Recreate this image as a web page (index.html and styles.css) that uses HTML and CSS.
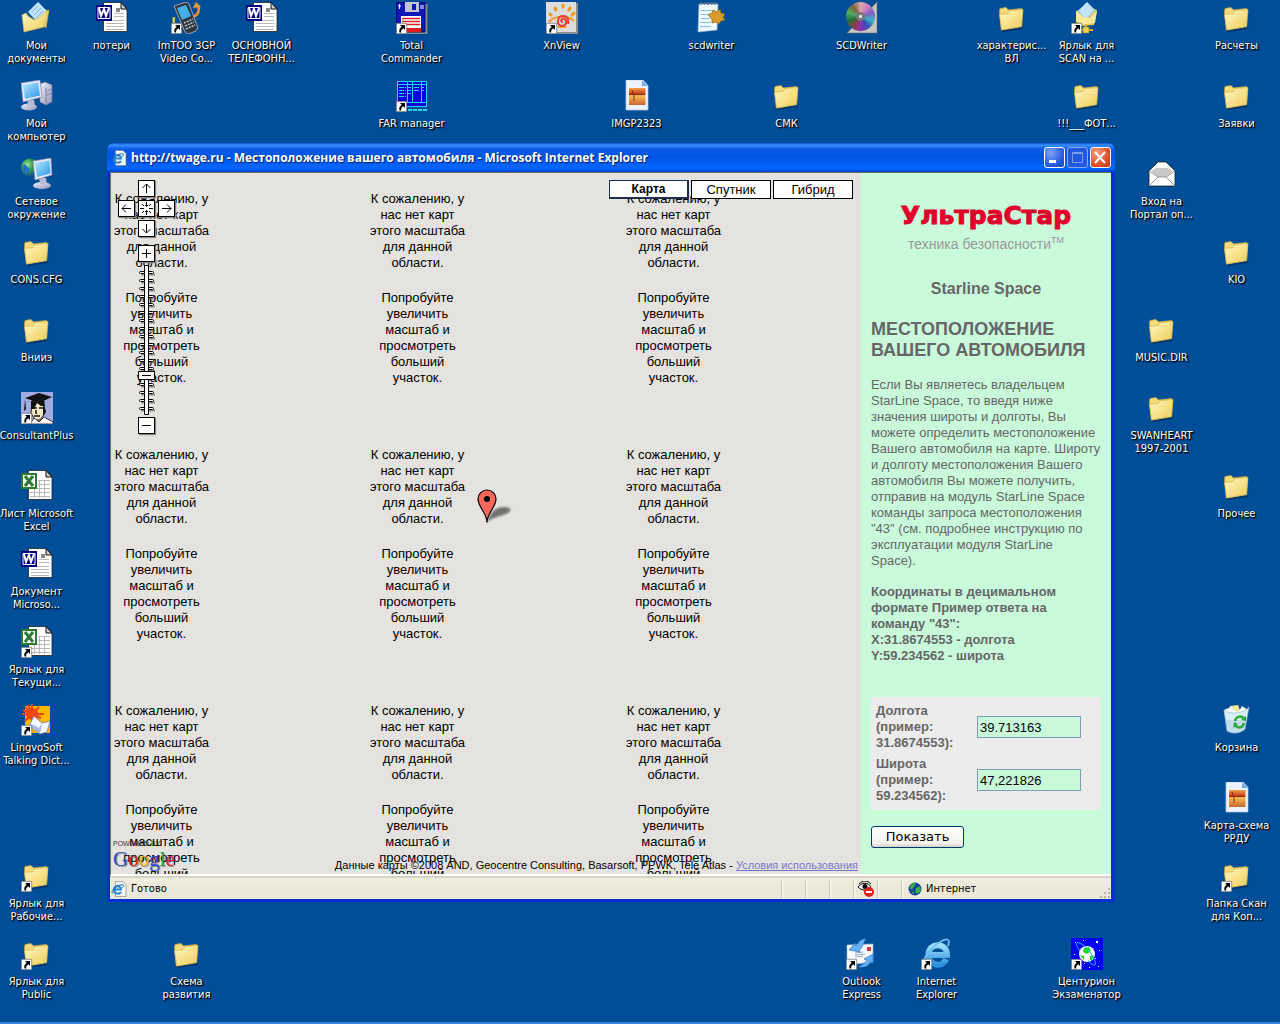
FILE: index.html
```html
<!DOCTYPE html>
<html lang="ru">
<head>
<meta charset="utf-8">
<title>Рабочий стол</title>
<link rel="stylesheet" href="styles.css">
</head>
<body>
<svg class="defs" aria-hidden="true">
  <defs>
    <linearGradient id="gFolder" x1="0" y1="0" x2="1" y2="1"><stop offset="0" stop-color="#fffac4"/><stop offset="1" stop-color="#efcb58"/></linearGradient>
    <linearGradient id="gScreen" x1="0" y1="0" x2="1" y2="1"><stop offset="0" stop-color="#b5ecff"/><stop offset="1" stop-color="#2d92ea"/></linearGradient>
    <linearGradient id="gCase" x1="0" y1="0" x2="1" y2="1"><stop offset="0" stop-color="#f2f3fb"/><stop offset="1" stop-color="#8e90b8"/></linearGradient>
    <linearGradient id="gPhoto" x1="0" y1="0" x2="0" y2="1"><stop offset="0" stop-color="#f5a04c"/><stop offset=".35" stop-color="#c63c18"/><stop offset=".45" stop-color="#f3bd55"/><stop offset="1" stop-color="#c9662c"/></linearGradient>
    <radialGradient id="gGlobe" cx=".35" cy=".35" r=".7"><stop offset="0" stop-color="#9be8a0"/><stop offset=".5" stop-color="#2d9a3c"/><stop offset="1" stop-color="#14469e"/></radialGradient>
    <linearGradient id="gIe" x1="0" y1="0" x2="0" y2="1"><stop offset="0" stop-color="#9fe0fb"/><stop offset="1" stop-color="#2a8fdc"/></linearGradient>

    <symbol id="arrow" viewBox="0 0 32 32"><path fill="#fff" stroke="#555" stroke-width=".6" d="M.3 21.3h10.4v10.4H.3z"/><path d="M4 23h5v5l-1.700-1.700C5.500 27.500 5 28.500 5.200 30.500H3.500C2.800 28 3.600 26.200 5.700 24.700z"/></symbol>
    <symbol id="folder" viewBox="0 0 32 32"><path fill="#0005" d="M5 28.500 27 25.500 28 10l-1 17-21 3z"/><path fill="#f4dc7a" stroke="#c9a545" stroke-width=".8" d="M3.500 9.500 4 6.500l6-1 2.500 2.500 13-1.500 1 2-1 16-20 3.500z"/><path fill="url(#gFolder)" stroke="#d6b550" stroke-width=".7" d="M3.500 12.500 12 11.500l2.500-3L27 7.500 25.500 24.500l-20 3.500z"/></symbol>
    <symbol id="docs" viewBox="0 0 32 32"><path fill="#bfe4fb" stroke="#6ea9dc" stroke-width=".7" d="M7 10 17 0l9 9-8 13z"/><path stroke="#78b0e0" d="m11 10 6-6m-4 9 7-7m-5 10 7-7" fill="none"/><path fill="#f0d468" stroke="#c9a545" stroke-width=".7" d="m25 9 3-1-3 18-3-3z"/><path fill="url(#gFolder)" stroke="#d6b550" stroke-width=".7" d="M1 13l4-2 2 3 6 4 5-2 7-7 1 2-3 14L3 30z"/></symbol>
    <symbol id="word" viewBox="0 0 32 32"><path fill="#fff" stroke="#222" stroke-width=".8" d="M7.500.500H25l6 6.500v22.500H7.500z"/><path d="M25 .5V7h6z" fill="#ccc" stroke="#111"/><path stroke="#b8b8b8" d="M10 18.500h18M10 21.500h18M10 24.500h18M10 27.500h18M18 11.500h10M18 14.500h10" fill="none"/><path fill="#888" d="M20 6h4v4h-4z"/><path fill="#00007f" d="M0 3h16v16H0z"/><path fill="none" stroke="#fff" stroke-width="1" d="M2 5.500h12v11H2z"/><path fill="none" stroke="#fff" stroke-width="2" d="M3 6l2 8 3-7 2 7 3-8"/></symbol>
    <symbol id="excel" viewBox="0 0 32 32"><path fill="#fff" stroke="#222" stroke-width=".8" d="M7.500.500H25l6 6.500v22.500H7.500z"/><path d="M25 .5V7h6z" fill="#ccc" stroke="#111"/><path stroke="#b8b8b8" d="M9 18.500h20M9 22.500h20M9 26.500h20M17 10.500h12M17 14.500h12M13.500 18v10M18.500 10v18M23.500 10v18" fill="none"/><path fill="#2c7a34" d="M0 3h16v16H0z"/><path fill="#fff" d="M2 5h12v12H2z"/><path stroke="#2c7a34" stroke-width="3" d="M4 6l8 10M12 6 4 16"/></symbol>
    <symbol id="computer" viewBox="0 0 32 32"><path fill="url(#gCase)" stroke="#75779b" stroke-width=".6" d="M19 4l5-2 7 3v17l-6 3-6-3z"/><path stroke="#75779b" d="M25 8v16m1-13 5-2m-5 6 5-2" fill="none" stroke-width=".8"/><ellipse cx="8" cy="27" rx="8" ry="3.500" fill="url(#gCase)"/><path fill="#b8bad6" d="M7 20h6l1 6H6z"/><path fill="#e6e8f6" stroke="#8587ad" stroke-width=".7" d="M0 3 19 0l2 17L2 22z"/><path fill="url(#gScreen)" d="M2 5 17 2.500l2 13L4 19z"/></symbol>
    <symbol id="network" viewBox="0 0 32 32"><circle cx="9" cy="9.500" r="9" fill="url(#gGlobe)"/><path fill="#2a6fd0" d="M2 7c3-2 4 2 6 3s-1 5-3 6C3 14 1 11 2 7z"/><ellipse cx="21" cy="27.500" rx="9" ry="3.500" fill="url(#gCase)"/><path fill="#b8bad6" d="M18 20h7l1 6h-7z"/><path fill="#e6e8f6" stroke="#8587ad" stroke-width=".7" d="M12 3 30 0l1 17-17 5z"/><path fill="url(#gScreen)" d="M14 5 28.500 2.500l1 13L16 19z"/></symbol>
    <symbol id="jpeg" viewBox="0 0 32 32"><path fill="#eef4ff" stroke="#b5c6e8" stroke-width=".7" d="M5 0h17l5 5.500V30H5z"/><path fill="#6fb1ec" d="M21 0v6h6z"/><path fill="url(#gPhoto)" d="M8 8h16.500v17H8z"/><path stroke="#8a2a10" d="M8 14.500h16M11 10l2 6v5" fill="none"/></symbol>
    <symbol id="phone" viewBox="0 0 32 32"><path fill="none" stroke="#cfc840" stroke-width="2.500" d="M3 15c-1 5 0 7 1 9"/><path fill="none" stroke="#ee8a28" stroke-width="3" d="M22 15c6-3 7-6 5-11"/><path fill="#f09a38" d="m22 6 3-6 5 5z"/><path fill="#30363f" stroke="#b7bfc9" stroke-width=".8" d="m3 4 12-4 3 2 9 24-2 3-8 3-3-2z"/><path fill="#46aee8" d="m6 6 9-3 5 11-9 4z"/><path stroke="#bcc8d5" stroke-width="1.400" stroke-dasharray="2 1" d="m13 21 9-4m-8 7 9-4m-8 7 9-4"/></symbol>
    <symbol id="floppy" viewBox="0 0 32 32"><path fill="#888" d="M2 2h29.500v30H2z"/><path fill="#0d18b8" stroke="#000060" stroke-width=".8" d="M.5.500H29v29.500H.5z"/><path fill="#c4c4d0" d="M9 0h14v10H9z"/><path fill="#0d18b8" d="M16 2h4v6h-4z"/><path stroke="#fff" d="M2 4h3M3.500 2v5M24 4h4M24 6h4"/><path fill="#fff" d="M5 14h20v16H5z"/><path stroke="#d42228" stroke-width="1.500" d="M6 16.500h18M6 19.500h18M6 22.500h18"/><path fill="#e01c24" d="M10 26h15v4H10z"/></symbol>
    <symbol id="xn" viewBox="0 0 32 32"><path fill="#8d8d8d" d="M1 1h31v31H1z"/><path fill="#dcdcdc" d="M0 0h30v30H0z"/><path stroke="#f29a1c" stroke-width="3" stroke-linecap="round" d="m4 12 1 1m4-7 1 2m7-5v2m7 1-1 2m5 3-2 2"/><path fill="none" stroke="#f29a1c" stroke-width="2" d="M3 20c6-7 18-7 25-1M12 25h8"/><path fill="none" stroke="#e84034" stroke-width="2" d="M17 20c-3 0-2-4 1-3 4 1 2 7-2 7-6-1-5-10 1-10 5 0 6 4 5 8"/></symbol>
    <symbol id="note" viewBox="0 0 32 32"><path fill="#eff8ff" stroke="#9ab9d0" stroke-width=".7" d="M3 2h19l-1 26-19 2z"/><path stroke="#65728c" stroke-width="2.500" stroke-dasharray="2 1.500" d="M4 1.500h18"/><path stroke="#84c2e6" d="M5 8.500h12M5 12.500h10M5 16.500h9M4 20.500h11M4 24.500h11"/><path fill="#d79b28" stroke="#92600e" stroke-width=".7" d="m12 13 4-2 1-3 4 2 3-3 1 4 4 1-2 3 2 3-4 1-2 3-3-2-4 1v-4z"/></symbol>
    <symbol id="blank" viewBox="0 0 32 32"><path fill="#c6c6bd" stroke="#6c6c66" stroke-width=".6" d="M31 0v31H1z"/></symbol>
    <symbol id="netdocs" viewBox="0 0 32 32"><path fill="#ecca5c" d="m5 9 11-5 10 4-3 15-13 1-5-4z"/><path fill="#bfe4fb" stroke="#6ea9dc" stroke-width=".7" d="m7 9 9-9 8 8-9 10z"/><path fill="#f9e899" d="m5 9 8 6 6 1 7-7-2 12-12 2-7-4z"/><path stroke="#e2b43c" stroke-width="2" d="M15 22v6m-4 0h11"/><path fill="#f6cf55" stroke="#a07818" stroke-width=".6" d="M12 25h6v6h-6z"/></symbol>
    <symbol id="far" viewBox="0 0 32 32"><path fill="#0000e0" stroke="#21d8f8" d="M1.500 1.500h29v25h-29z"/><path stroke="#21d8f8" fill="none" d="M11.500 1v21m5-21v21m9-21v21M2 22.500h28M2 4.500h28"/><path stroke="#21d8f8" stroke-width="1" stroke-dasharray="5 1" d="M3 7.500h7m-7 3h7m-7 3h7m-7 3h7m8-9h6m-6 3h6m-12-3h3m-3 3h3m-3 3h3m11-6h2m-2 3h2"/><path stroke="#21d8f8" stroke-width="2" stroke-dasharray="4 1" d="M12 30h19"/></symbol>
    <symbol id="mail" viewBox="0 0 32 32"><path fill="#fff" stroke="#222" stroke-width=".8" d="M3 13 12 4h8l9 9v15H3z"/><path fill="#c8c8c8" d="m5 13 5-3h12l5 3-7 6h-8z"/><path fill="none" stroke="#999" d="m3 13 9 6h8l9-6M3 28l9-9m17 9-9-9"/></symbol>
    <symbol id="scholar" viewBox="0 0 32 32"><path fill="#a0abe0" d="M0 0h32v32H0z"/><path fill="#f4e7c4" stroke="#222" d="M11 9h12l1 12-5 7h-5l-4-7z"/><path fill="#111" d="m4 6 14-5 13 4-13 6zM10 9h13v5h-3l-4-3-3 6h-3zM4 7l1 10-2 2 1-12zM22 13l3 6-3 5z"/><path stroke="#111" stroke-width="1.500" fill="none" d="M12 16h4m2 0h4m-7 2v4m-2 2h6"/><path fill="#fff" stroke="#111" stroke-width=".8" d="m9 32 4-6 5 4 5-5 9 5v2z"/></symbol>
    <symbol id="lingvo" viewBox="0 0 32 32"><path fill="#ffb900" d="M4 2h25v27H4z"/><circle cx="11" cy="10" r="6" fill="#f04414"/><path stroke="#f04414" stroke-width="2" d="M11 0v22M1 10h22M4 3l14 14M18 3 4 17M7 1l8 18M2 6l18 8"/><path fill="#f5f7ff" stroke="#6174a8" stroke-width=".7" d="m13 12 8 7 8-2-3 11-7 2-11-8z"/><path fill="#a7b7de" d="m21 19-2 11-11-8 2-2 8 4z"/></symbol>
    <symbol id="bin" viewBox="0 0 32 32"><path fill="#f5e69a" d="m9 2 8-1 3 8H8z"/><path fill="#f4f8fb" d="m3 6 7-3 7 6 4-7 6 4-2 10H5z"/><path fill="#d8edf5" fill-opacity=".9" stroke="#9cc2d8" stroke-width=".7" d="M3 6c5 5 20 4 25-3l-4 22c-5 5-13 5-18 2z"/><path fill="none" stroke="#2ca838" stroke-width="2.500" d="M14 17c1-5 7-6 9-2m0 4c-1 5-6 6-9 2"/><path fill="#2ca838" d="m20 16 5-4v5zM17 20l-5 4 1-6z"/></symbol>
    <symbol id="outlook" viewBox="0 0 32 32"><path fill="#f8fafc" stroke="#9eb5cf" stroke-width=".7" d="m1 7 26-1v18L1 27z"/><path fill="#cf3a32" d="M21 9h4v4h-4z"/><path stroke="#93a9c8" d="m9 15 8-1m-8 3 10-1m-10 3 8-1"/><path fill="#64b0f2" stroke="#2c73c8" stroke-width=".7" d="M3 12 9 5l1 3c4-5 4-7 10-7-4 5-2 8-7 11l1 2zM27 16l-9 5 3 1c-3 5-5 4-8 7 7 1 10-2 12-6l2 2z"/></symbol>
    <symbol id="ie" viewBox="0 0 32 32"><path fill="none" stroke="url(#gIe)" stroke-width="6" d="M8 17h18C26 4 8 4 7.500 16.500 7 28 22 30 25 21"/><path fill="none" stroke="#6cc0f2" stroke-width="1.800" d="M5 26C-2 30 5 12 19 4c6-4 11-4 8 4"/></symbol>
    <symbol id="planet" viewBox="0 0 32 32"><path fill="#0000f4" d="M0 0h32v32H0z"/><path fill="#fff" d="M4 4h1v1H4zM12 2h1v1h-1zM25 3h2v2h-2zM28 12h1v1h-1zM3 16h1v1H3zM24 20h1v1h-1zM27 28h1v1h-1zM18 29h1v1h-1zM13 25h1v1h-1z"/><circle cx="16" cy="16" r="8" fill="#fff"/><path fill="#18d824" d="m13 10 5-1 2 4-4 3-4-2zM9 17l4 1v4zM19 18l4-1-2 5h-2z"/><path fill="none" stroke="#20c8f0" d="M9 13C3 5 5 2 12 7s16 20 11 20c-2 0-5-3-6-5"/></symbol>
    <symbol id="iepage" viewBox="0 0 16 16"><path fill="#f5f7f2" stroke="#777" stroke-width=".6" d="M4.500.500H12L15 3.500v12H4.500z"/><path fill="none" stroke="#2587d8" stroke-width="2" d="M3 8.500h7C10 4 3 4 3 9s6 4 7 2"/><path fill="none" stroke="#1c68b8" d="M2 12C-1 13 3 5 9 4s3 2 2 3"/></symbol>
  </defs>
</svg>

<main class="desktop">
  <nav class="icons" aria-label="Значки рабочего стола">
    <a class="icon c1 r1" href="#"><svg><use href="#docs"/></svg><span>Мои<br>документы</span></a>
    <a class="icon c2 r1" href="#"><svg><use href="#word"/></svg><span>потери</span></a>
    <a class="icon c3 r1" href="#"><svg><use href="#phone"/><use href="#arrow"/></svg><span>ImTOO 3GP<br>Video Co...</span></a>
    <a class="icon c4 r1" href="#"><svg><use href="#word"/></svg><span>ОСНОВНОЙ<br>ТЕЛЕФОНН...</span></a>
    <a class="icon c6 r1" href="#"><svg><use href="#floppy"/><use href="#arrow"/></svg><span>Total<br>Commander</span></a>
    <a class="icon c8 r1" href="#"><svg><use href="#xn"/><use href="#arrow"/></svg><span>XnView</span></a>
    <a class="icon c10 r1" href="#"><svg><use href="#note"/></svg><span>scdwriter</span></a>
    <a class="icon c12 r1" href="#"><span class="cd"><svg><use href="#blank"/></svg><i class="disc"></i></span><span>SCDWriter</span></a>
    <a class="icon c14 r1" href="#"><svg><use href="#folder"/></svg><span>характерис...<br>ВЛ</span></a>
    <a class="icon c15 r1" href="#"><svg><use href="#netdocs"/><use href="#arrow"/></svg><span>Ярлык для<br>SCAN на ...</span></a>
    <a class="icon c17 r1" href="#"><svg><use href="#folder"/></svg><span>Расчеты</span></a>

    <a class="icon c1 r2" href="#"><svg><use href="#computer"/></svg><span>Мой<br>компьютер</span></a>
    <a class="icon c6 r2" href="#"><svg><use href="#far"/><use href="#arrow"/></svg><span>FAR manager</span></a>
    <a class="icon c9 r2" href="#"><svg><use href="#jpeg"/></svg><span>IMGP2323</span></a>
    <a class="icon c11 r2" href="#"><svg><use href="#folder"/></svg><span>СМК</span></a>
    <a class="icon c15 r2" href="#"><svg><use href="#folder"/></svg><span>!!!___ФОТ...</span></a>
    <a class="icon c17 r2" href="#"><svg><use href="#folder"/></svg><span>Заявки</span></a>

    <a class="icon c1 r3" href="#"><svg><use href="#network"/></svg><span>Сетевое<br>окружение</span></a>
    <a class="icon c16 r3" href="#"><svg><use href="#mail"/></svg><span>Вход на<br>Портал оп...</span></a>
    <a class="icon c1 r4" href="#"><svg><use href="#folder"/></svg><span>CONS.CFG</span></a>
    <a class="icon c17 r4" href="#"><svg><use href="#folder"/></svg><span>KIO</span></a>
    <a class="icon c1 r5" href="#"><svg><use href="#folder"/></svg><span>Внииэ</span></a>
    <a class="icon c16 r5" href="#"><svg><use href="#folder"/></svg><span>MUSIC.DIR</span></a>
    <a class="icon c1 r6" href="#"><svg><use href="#scholar"/><use href="#arrow"/></svg><span>ConsultantPlus</span></a>
    <a class="icon c16 r6" href="#"><svg><use href="#folder"/></svg><span>SWANHEART<br>1997-2001</span></a>
    <a class="icon c1 r7" href="#"><svg><use href="#excel"/></svg><span>Лист Microsoft<br>Excel</span></a>
    <a class="icon c17 r7" href="#"><svg><use href="#folder"/></svg><span>Прочее</span></a>
    <a class="icon c1 r8" href="#"><svg><use href="#word"/></svg><span>Документ<br>Microso...</span></a>
    <a class="icon c1 r9" href="#"><svg><use href="#excel"/><use href="#arrow"/></svg><span>Ярлык для<br>Текущи...</span></a>
    <a class="icon c1 r10" href="#"><svg><use href="#lingvo"/><use href="#arrow"/></svg><span>LingvoSoft<br>Talking Dict...</span></a>
    <a class="icon c17 r10" href="#"><svg><use href="#bin"/></svg><span>Корзина</span></a>
    <a class="icon c17 r11" href="#"><svg><use href="#jpeg"/></svg><span>Карта-схема<br>РРДУ</span></a>
    <a class="icon c1 r12" href="#"><svg><use href="#folder"/><use href="#arrow"/></svg><span>Ярлык для<br>Рабочие...</span></a>
    <a class="icon c17 r12" href="#"><svg><use href="#folder"/><use href="#arrow"/></svg><span>Папка Скан<br>для Коп...</span></a>
    <a class="icon c1 r13" href="#"><svg><use href="#folder"/><use href="#arrow"/></svg><span>Ярлык для<br>Public</span></a>
    <a class="icon c3 r13" href="#"><svg><use href="#folder"/></svg><span>Схема<br>развития</span></a>
    <a class="icon c12 r13" href="#"><svg><use href="#outlook"/><use href="#arrow"/></svg><span>Outlook<br>Express</span></a>
    <a class="icon c13 r13" href="#"><svg><use href="#ie"/><use href="#arrow"/></svg><span>Internet<br>Explorer</span></a>
    <a class="icon c15 r13" href="#"><svg><use href="#planet"/><use href="#arrow"/></svg><span>Центурион<br>Экзаменатор</span></a>
  </nav>

  <section class="window">
    <header class="titlebar">
      <svg class="small"><use href="#iepage"/></svg>
      <h1>http://twage.ru - Местоположение вашего автомобиля - Microsoft Internet Explorer</h1>
      <button class="cap" aria-label="Свернуть"><svg viewBox="0 0 19 19"><path fill="#fff" d="M4 12h7v3H4z"/></svg></button>
      <button class="cap dim" aria-label="Развернуть"><svg viewBox="0 0 19 19"><path fill="none" stroke="#7b9df0" d="M4.500 4.500h10v10h-10zM4 5.500h11"/></svg></button>
      <button class="cap close" aria-label="Закрыть"><svg viewBox="0 0 19 19"><path stroke="#fff" stroke-width="2" d="m4 4 10 11M14 4 4 15"/></svg></button>
    </header>

    <div class="client">
      <div class="map">
        <div class="tiles">
          <div class="tile"><p>К сожалению, у нас нет карт этого масштаба для данной области.</p><p>Попробуйте увеличить масштаб и просмотреть больший участок.</p></div>
          <div class="tile"><p>К сожалению, у нас нет карт этого масштаба для данной области.</p><p>Попробуйте увеличить масштаб и просмотреть больший участок.</p></div>
          <div class="tile"><p>К сожалению, у нас нет карт этого масштаба для данной области.</p><p>Попробуйте увеличить масштаб и просмотреть больший участок.</p></div>
          <div class="tile"><p>К сожалению, у нас нет карт этого масштаба для данной области.</p><p>Попробуйте увеличить масштаб и просмотреть больший участок.</p></div>
          <div class="tile"><p>К сожалению, у нас нет карт этого масштаба для данной области.</p><p>Попробуйте увеличить масштаб и просмотреть больший участок.</p></div>
          <div class="tile"><p>К сожалению, у нас нет карт этого масштаба для данной области.</p><p>Попробуйте увеличить масштаб и просмотреть больший участок.</p></div>
          <div class="tile"><p>К сожалению, у нас нет карт этого масштаба для данной области.</p><p>Попробуйте увеличить масштаб и просмотреть больший участок.</p></div>
          <div class="tile"><p>К сожалению, у нас нет карт этого масштаба для данной области.</p><p>Попробуйте увеличить масштаб и просмотреть больший участок.</p></div>
          <div class="tile"><p>К сожалению, у нас нет карт этого масштаба для данной области.</p><p>Попробуйте увеличить масштаб и просмотреть больший участок.</p></div>
        </div>

        <div class="controls">
          <div class="pad">
            <button class="ctl up" aria-label="Вверх"><svg viewBox="0 0 17 17"><path d="M8.500 13V4m-4 4 4-4 4 4"/></svg></button>
            <button class="ctl left" aria-label="Влево"><svg viewBox="0 0 17 17"><path d="M13 8.500H4m4-4-4 4 4 4"/></svg></button>
            <button class="ctl mid" aria-label="Вернуться"><svg viewBox="0 0 17 17"><path d="M8.500 2v4m0 5v4M2 8.500h4m5 0h4M4 4l2 2m5 5 2 2M13 4l-2 2m-5 5-2 2M7 5l1.500 1.500L10 5M7 12l1.500-1.500L10 12"/></svg></button>
            <button class="ctl right" aria-label="Вправо"><svg viewBox="0 0 17 17"><path d="M4 8.500h9m-4-4 4 4-4 4"/></svg></button>
            <button class="ctl down" aria-label="Вниз"><svg viewBox="0 0 17 17"><path d="M8.500 4v9m-4-4 4 4 4-4"/></svg></button>
          </div>
          <button class="ctl" aria-label="Увеличить"><svg viewBox="0 0 17 17"><path d="M8.500 4v9M4 8.500h9"/></svg></button>
          <svg class="slider" viewBox="0 0 17 155">
            <defs><pattern id="ticks" width="17" height="8" patternUnits="userSpaceOnUse"><path stroke="#555" stroke-opacity=".6" stroke-width="2" d="M3 4.500h14"/><rect x="1.500" y="1.500" width="14" height="2" rx="1" fill="#fff" stroke="#000"/></pattern></defs>
            <path fill="url(#ticks)" d="M0 8h17v144H0z"/>
            <path fill="#fff" stroke="#000" d="M6.500 3.500h4v149h-4z"/>
            <path fill="#fff" stroke="#000" d="M.5 109.500h16v8H.5z"/><path stroke="#000" d="M4 113.500h9"/>
          </svg>
          <button class="ctl" aria-label="Уменьшить"><svg viewBox="0 0 17 17"><path d="M4 8.500h9"/></svg></button>
        </div>

        <div class="types">
          <button class="type on">Карта</button>
          <button class="type">Спутник</button>
          <button class="type">Гибрид</button>
        </div>

        <svg class="pin" viewBox="0 0 36 36">
          <defs><filter id="soft" x="-20%" y="-20%" width="140%" height="140%"><feGaussianBlur stdDeviation="1"/></filter></defs>
          <path fill="#000" fill-opacity=".5" filter="url(#soft)" d="M10 33c2-5 4-11 11-14 7-2 14-1 12 3-3 5-14 4-23 11z"/>
          <path fill="#fd665b" stroke="#000" stroke-width="1.200" d="M10 33.500C10 24 1 18 1 10a9 9 0 0 1 18 0c0 8-9 14-9 23.500z"/><circle cx="10" cy="10" r="3"/>
        </svg>

        <div class="brand"><small>POWERED BY</small><b><i class="gb">G</i><i class="gr">o</i><i class="gy">o</i><i class="gb">g</i><i class="gg">l</i><i class="gr">e</i></b></div>
        <div class="copyright">Данные карты ©2008 AND, Geocentre Consulting, Basarsoft, PPWK, Tele Atlas - <a href="#">Условия использования</a></div>
      </div>

      <aside class="side">
        <div class="logo">УльтраСтар</div>
        <div class="slogan">техника безопасности<sup>TM</sup></div>
        <h2>Starline Space</h2>
        <h3>МЕСТОПОЛОЖЕНИЕ ВАШЕГО АВТОМОБИЛЯ</h3>
        <p>Если Вы являетесь владельцем StarLine Space, то введя ниже значения широты и долготы, Вы можете определить местоположение Вашего автомобиля на карте. Широту и долготу местоположения Вашего автомобиля Вы можете получить, отправив на модуль StarLine Space команды запроса местоположения "43" (см. подробнее инструкцию по эксплуатации модуля StarLine Space).</p>
        <p class="strong">Координаты в децимальном формате Пример ответа на команду "43":<br>X:31.8674553 - долгота<br>Y:59.234562 - широта</p>
        <form onsubmit="return false">
          <div class="fields">
            <label for="lon">Долгота (пример: 31.8674553):</label><input id="lon" type="text" value="39.713163">
            <label for="lat">Широта (пример: 59.234562):</label><input id="lat" type="text" value="47,221826">
          </div>
          <button class="show" type="submit">Показать</button>
        </form>
      </aside>
    </div>

    <footer class="status">
      <svg class="small"><use href="#iepage"/></svg>
      <span class="ready">Готово</span>
      <span class="cell"></span><span class="cell"></span><span class="cell"></span>
      <span class="cell"><svg viewBox="0 0 18 16"><path fill="#fff" stroke="#000" d="M1 6c4-5 10-5 13 0-4 4-9 4-13 0z"/><circle cx="8" cy="5.500" r="2.500"/><path stroke="#000" d="M2 3c4-4 8-4 12 0" fill="none"/><circle cx="12" cy="11" r="5" fill="#e02020"/><path fill="#fff" d="M9 10h6v2H9z"/></svg></span>
      <span class="cell"></span>
      <span class="zone"><svg viewBox="0 0 14 14"><circle cx="7" cy="7" r="6.500" fill="#173fa8"/><path fill="#35b045" d="M2 4c2-3 4-3 5-3s0 3-1 4-2 3-4 2zM8 6l4-2 1 4-3 4-3-2zM3 9l3 1v3z"/></svg>Интернет</span>
      <svg class="grip" viewBox="0 0 12 12"><path fill="#b8b4a2" d="M9 1h2v2H9zM9 5h2v2H9zM9 9h2v2H9zM5 5h2v2H5zM5 9h2v2H5zM1 9h2v2H1z"/></svg>
    </footer>
  </section>
</main>
<div class="taskbar"></div>
</body>
</html>
```
FILE: styles.css
```css
* { box-sizing: border-box; }
html, body { margin: 0; min-height: 100vh; }
body {
  display: flex;
  flex-direction: column;
  background: #004e98;
  font-family: "Liberation Sans", Arial, sans-serif;
  font-size: 13px;
  line-height: 16px;
  overflow: hidden;
}
button, input { font: inherit; margin: 0; padding: 0; }
.defs { position: absolute; width: 0; height: 0; }
.desktop { position: relative; flex: 1; }
.taskbar { height: 2px; background: #3a80e0; }

/* desktop icons */
.icons {
  display: grid;
  grid-template-columns: repeat(17, 75px);
  grid-template-rows: repeat(13, 78px);
  padding-top: 2px;
}
.icon {
  display: flex;
  flex-direction: column;
  align-items: center;
  gap: 5px;
  margin-right: 2px;
  color: #fff;
  font: 11px/13px "DejaVu Sans Condensed", Tahoma, sans-serif;
  text-align: center;
  text-decoration: none;
  text-shadow: 1px 1px 1px #000, 1px 1px 2px #000;
  white-space: nowrap;
}
.icon svg { display: block; width: 32px; height: 32px; flex: none; }
.cd { display: grid; }
.cd > * { grid-area: 1 / 1; }
.disc {
  width: 29px;
  height: 29px;
  border-radius: 50%;
  background:
    radial-gradient(circle, #eee 0 1px, #777 2px 4px, transparent 5px),
    conic-gradient(#d8a8a8, #d080c0, #8060c0, #40b0c8, #3050b0, #9030b0, #804040, #207040, #50b060, #806040, #d8a8a8);
}
.c1 { grid-column: 1; } .c2 { grid-column: 2; } .c3 { grid-column: 3; }
.c4 { grid-column: 4; } .c6 { grid-column: 6; } .c8 { grid-column: 8; }
.c9 { grid-column: 9; } .c10 { grid-column: 10; } .c11 { grid-column: 11; }
.c12 { grid-column: 12; } .c13 { grid-column: 13; } .c14 { grid-column: 14; }
.c15 { grid-column: 15; } .c16 { grid-column: 16; } .c17 { grid-column: 17; }
.r1 { grid-row: 1; } .r2 { grid-row: 2; } .r3 { grid-row: 3; } .r4 { grid-row: 4; }
.r5 { grid-row: 5; } .r6 { grid-row: 6; } .r7 { grid-row: 7; } .r8 { grid-row: 8; }
.r9 { grid-row: 9; } .r10 { grid-row: 10; } .r11 { grid-row: 11; }
.r12 { grid-row: 12; } .r13 { grid-row: 13; }

/* browser window */
.window {
  position: absolute;
  left: 107px;
  right: 165px;
  top: 143px;
  padding: 0 4px 3px 3px;
  background: #0a2fd0;
  border-radius: 7px 7px 0 0;
  overflow: hidden;
}
.titlebar {
  display: flex;
  align-items: center;
  gap: 2px;
  height: 29px;
  margin: 0 -4px 0 -3px;
  padding: 0 4px 0 4px;
  background: linear-gradient(#0a50d8, #3a90ff 2px, #0a5be8 6px, #0054e3 14px, #0062fa 22px, #0466ff 26px, #0040c8);
}
.titlebar h1 {
  flex: 1;
  margin: 0;
  padding-left: 2px;
  color: #fff;
  font: bold 12px/16px "Open Sans", "Trebuchet MS", sans-serif;
  text-shadow: 1px 1px 1px #0b1f6b;
  white-space: nowrap;
}
.small { width: 16px; height: 16px; flex: none; }
.cap {
  width: 21px;
  height: 21px;
  border: 1px solid #fff;
  border-radius: 3px;
  background: radial-gradient(circle at 30% 25%, #7ba2f8, #2a5fe0 60%, #1a46c0);
}
.cap svg { display: block; width: 19px; height: 19px; }
.cap.dim { border-color: #8cacf0; background: #2257df; }
.cap.close { background: radial-gradient(circle at 30% 25%, #f0a088, #e0512c 60%, #c03410); }

.client {
  display: flex;
  border-top: 1px solid #716f64;
  border-left: 1px solid #716f64;
  border-bottom: 2px solid #fff;
}

/* map */
.map { position: relative; flex: 1; background: #e5e3df; overflow: hidden; }
.tiles {
  position: absolute;
  inset: 15px 0 0 0;
  display: grid;
  grid-template-columns: repeat(3, 256px);
  grid-auto-rows: 256px;
  overflow: hidden;
}
.tile { width: 101px; padding-top: 3px; text-align: center; }
.tile p { margin: 0 0 19px; }
.controls {
  position: absolute;
  left: 7px;
  top: 7px;
  display: flex;
  flex-direction: column;
  align-items: center;
}
.pad {
  display: grid;
  grid-template-columns: repeat(3, 17px);
  grid-template-rows: repeat(3, 17px);
  gap: 3px;
  margin-bottom: 8px;
}
.up { grid-area: 1 / 2; }
.left { grid-area: 2 / 1; }
.mid { grid-area: 2 / 2; }
.right { grid-area: 2 / 3; }
.down { grid-area: 3 / 2; }
.ctl {
  width: 17px;
  height: 17px;
  border: 1px solid #000;
  background: #fff;
  box-shadow: 1px 1px 1px #888;
}
.ctl svg { display: block; width: 17px; height: 17px; margin: -1px; }
.ctl path { fill: none; stroke: #000; }
.slider { display: block; width: 17px; height: 155px; }
.types { position: absolute; right: 8px; top: 7px; display: flex; gap: 2px; }
.type {
  width: 80px;
  height: 19px;
  border: 1px solid #000;
  background: #fff;
  color: #000;
  line-height: 17px;
}
.type.on { border-color: #1c3050; border-width: 1px 2px 2px 1px; font-weight: bold; font-size: 12px; }
.pin { position: absolute; left: 366px; top: 316px; width: 36px; height: 36px; }
.brand { position: absolute; left: 2px; bottom: 3px; display: flex; flex-direction: column; }
.brand small { font-size: 7px; line-height: 6px; color: #333; }
.brand b { font: 21px/24px "Liberation Serif", "Times New Roman", serif; text-shadow: 1px 1px 1px #0006; }
.brand i { font-style: normal; }
.gb { color: #2a50c8; } .gr { color: #d02c30; } .gy { color: #e0b020; } .gg { color: #22a040; }
.copyright { position: absolute; right: 3px; bottom: 2px; font-size: 11px; line-height: 14px; white-space: nowrap; }
.copyright a { color: #7777cc; }

/* right column */
.side { width: 250px; flex: none; padding: 27px 10px 26px; background: #c9fbdb; color: #666; }
.logo { color: #e0002c; font: bold 25px/32px "DejaVu Sans", Verdana, sans-serif; -webkit-text-stroke: 1px #e0002c; text-align: center; white-space: nowrap; }
.slogan { padding-top: 3px; color: #999; font-size: 14px; line-height: 18px; text-align: center; white-space: nowrap; }
.slogan sup { font-size: 9px; line-height: 9px; vertical-align: 6px; }
.side h2 { margin: 27px 0 0; font-size: 16px; line-height: 18px; text-align: center; }
.side h3 { margin: 21px 0 16px; font-size: 18px; line-height: 21px; }
.side p { margin: 0 0 15px; }
.side p.strong { margin-bottom: 33px; font-weight: bold; }
.fields {
  display: grid;
  grid-template-columns: 96px 104px;
  align-items: center;
  gap: 5px;
  padding: 6px 5px;
  background: #ececec;
  font-weight: bold;
}
.fields input {
  width: 104px;
  height: 22px;
  padding: 0 2px;
  border: 1px solid #7f9db9;
  background: #c9fbdb;
  color: #000;
  font-weight: normal;
}
.show {
  display: block;
  width: 93px;
  height: 22px;
  margin-top: 16px;
  border: 1px solid #003c74;
  border-radius: 3px;
  background: linear-gradient(#fff, #f4f3ee 80%, #d8d0c4);
  color: #000;
  font: 13px/20px "DejaVu Sans", Verdana, sans-serif;
}

/* status bar */
.status {
  display: flex;
  align-items: center;
  height: 23px;
  padding-top: 2px;
  background: linear-gradient(#c8c5b4, #f2f0e4 3px, #ece9d8 8px, #ece9d8);
  font: 11px/14px "DejaVu Sans Condensed", Tahoma, sans-serif;
}
.status .small { margin: 0 4px 0 1px; }
.ready { flex: 1; }
.cell { display: flex; justify-content: center; align-items: center; width: 24px; height: 18px; border-left: 1px solid #c9c6b5; box-shadow: inset 1px 0 #fff; }
.cell svg { width: 18px; height: 16px; flex: none; }
.zone { display: flex; align-items: center; gap: 4px; width: 198px; height: 18px; padding-left: 6px; border-left: 1px solid #c9c6b5; box-shadow: inset 1px 0 #fff; }
.zone svg { width: 14px; height: 14px; }
.grip { width: 12px; height: 12px; align-self: flex-end; }
```
